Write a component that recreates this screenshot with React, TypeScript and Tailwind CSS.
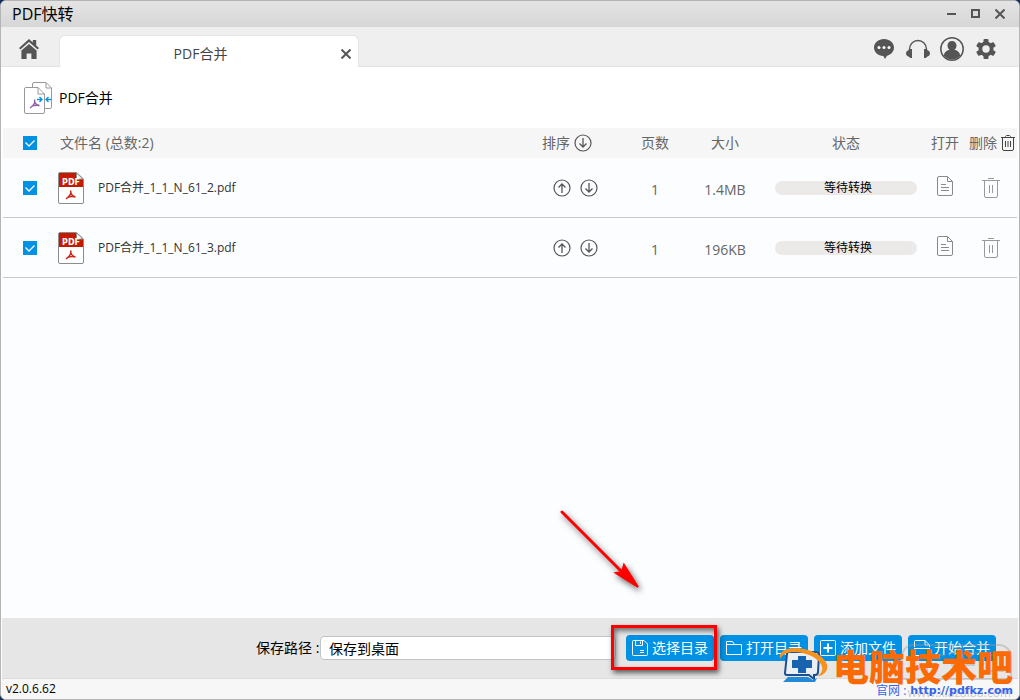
import { useState } from "react";

const initialFiles = [
  { id: 1, name: "PDF合并_1_1_N_61_2.pdf", pages: 1, size: "1.4MB" },
  { id: 2, name: "PDF合并_1_1_N_61_3.pdf", pages: 1, size: "196KB" },
];

const HomeIcon = () => (
  <svg width="20" height="20" viewBox="0 0 20 20" fill="#555">
    <path d="M10 0L0 9l1.4 1.5L10 3l8.600 7.500L20 9l-2.800-2.500V1h-3.400v2.400z" />
    <path d="M10 5L2.400 11.600V20h5.200v-5.500h4.800V20h5.200v-8.400z" />
  </svg>
);

const ChatIcon = () => (
  <svg width="20" height="20" viewBox="0 0 20 20">
    <path
      fill="#555"
      d="M10 0C4.400 0 0 3.700 0 8.600c0 4.700 4.100 8.300 9.300 8.500L11 20l2-3.300c4.100-1 7-4.200 7-8.100C20 3.700 15.600 0 10 0z"
    />
    <circle cx="5" cy="8.500" r="1.500" fill="#fff" />
    <circle cx="10" cy="8.500" r="1.500" fill="#fff" />
    <circle cx="15" cy="8.500" r="1.500" fill="#fff" />
  </svg>
);

const HeadsetIcon = () => (
  <svg width="24" height="20" viewBox="0 0 24 20">
    <path d="M3.500 12V10a8.500 8.500 0 0 1 17 0v2" fill="none" stroke="#555" strokeWidth="1.400" />
    <path
      fill="#555"
      d="M6 10v9H4.200L3 17.800C1.200 17.500 0 16 0 14.300s1.200-3 3-3.400L4.200 10zM18 10v9h1.800l1.200-1.200c1.800-.3 3-1.800 3-3.500s-1.200-3-3-3.400L19.800 10z"
    />
  </svg>
);

const UserIcon = () => (
  <svg width="24" height="24" viewBox="0 0 24 24">
    <circle cx="12" cy="12" r="11.200" fill="none" stroke="#555" strokeWidth="1.500" />
    <path
      fill="#555"
      d="M12 4c-2.700 0-4.500 1.900-4.500 4.500 0 1.900.8 3.400 2 4.300-3.200.7-5.200 2.600-5.700 5.700C5.800 21 8.700 22.500 12 22.500s6.200-1.500 8.200-4c-.5-3.100-2.500-5-5.700-5.700 1.200-.9 2-2.400 2-4.300C16.500 5.900 14.700 4 12 4z"
    />
  </svg>
);

const GearIcon = () => (
  <svg width="20" height="20" viewBox="0 0 20 20">
    <g fill="#555">
      <circle cx="10" cy="10" r="7.500" />
      <rect x="7.500" y="0" width="5" height="20" rx="1" />
      <rect x="7.500" y="0" width="5" height="20" rx="1" transform="rotate(60 10 10)" />
      <rect x="7.500" y="0" width="5" height="20" rx="1" transform="rotate(120 10 10)" />
    </g>
    <circle cx="10" cy="10" r="3.700" fill="#efefef" />
  </svg>
);

const MergeIcon = () => (
  <svg width="28" height="32" viewBox="0 0 28 32" fill="none">
    <path
      d="M8.500 5V2A1.500 1.500 0 0 1 10 .500h12L27.500 6v19a1.500 1.500 0 0 1-1.500 1.500h-5M22 .500V6h5.500"
      stroke="#999"
    />
    <path
      d="M2 5.500h12L20.500 12v18a1.500 1.500 0 0 1-1.500 1.500H2A1.500 1.500 0 0 1 .500 30V7A1.500 1.500 0 0 1 2 5.500zM14 5.500V12h6.500"
      fill="#fff"
      stroke="#999"
    />
    <path
      d="M10.500 17.500c1 3-1.500 6.500-4.500 8.500M10.500 20c1 2 2.500 3.200 5 3.500M8 24c2-.8 4-1 7-.5"
      stroke="#9060a8"
      strokeWidth="1.400"
    />
    <path
      d="M13 17.500h5M15.500 15l2.500 2.500-2.500 2.500M27 17.500h-5M24.500 15L22 17.500l2.500 2.500"
      stroke="#0c95de"
      strokeWidth="1.400"
    />
  </svg>
);

const PdfIcon = () => (
  <svg width="26" height="32" viewBox="0 0 26 32">
    <path
      d="M2 .500h16.500L25.500 7v23a1.500 1.500 0 0 1-1.500 1.500H2A1.500 1.500 0 0 1 .500 30V2A1.500 1.500 0 0 1 2 .500z"
      fill="#fff"
      stroke="#8c8c8c"
    />
    <path d="M1 1h17.500v6H25v8H1z" fill="#c41a02" />
    <path d="M18.500 1v6H25z" fill="#fff" stroke="#8c8c8c" />
    <text
      x="13"
      y="13"
      textAnchor="middle"
      fontSize="8"
      fontWeight="bold"
      fontFamily="DejaVu Sans, sans-serif"
      fill="#fff"
    >
      PDF
    </text>
    <path
      d="M12.500 18.500c1.400 3-1 6-4.500 8.500M12.800 21c.7 2 2 3.400 4.700 4M9.500 25.500c2.500-1 5-1.200 8-.5"
      fill="none"
      stroke="#c8281c"
      strokeWidth="1.500"
    />
  </svg>
);

const CircleArrow = ({ up = false }: { up?: boolean }) => (
  <svg width="18" height="18" viewBox="0 0 18 18" fill="none" stroke="#555">
    <circle cx="9" cy="9" r="8" strokeWidth="1.200" />
    <path
      d={up ? "M9 14V5M5.500 8.500L9 5l3.500 3.500" : "M9 4v9M5.500 9.500L9 13l3.500-3.500"}
      strokeWidth="1.300"
    />
  </svg>
);

const DocIcon = () => (
  <svg width="16" height="20" viewBox="0 0 16 20" fill="none" stroke="#8a8a8a">
    <path d="M2 .500h8.500l5 5V18a1.500 1.500 0 0 1-1.500 1.500H2A1.500 1.500 0 0 1 .500 18V2A1.500 1.500 0 0 1 2 .500zM10.500.500v5h5" />
    <path d="M4 8.500h5M4 11.500h8M4 14.500h8" />
  </svg>
);

const TrashIcon = () => (
  <svg width="18" height="20" viewBox="0 0 18 20" fill="none" stroke="#999">
    <path d="M0 2.500h18M6 .500h6M2.500 2.500V18A1.500 1.500 0 0 0 4 19.500h10a1.500 1.500 0 0 0 1.500-1.500V2.500" />
    <path d="M7.500 7v8M10.500 7v8" />
  </svg>
);

const TrashAllIcon = () => (
  <svg width="14" height="16" viewBox="0 0 14 16" fill="none" stroke="#444">
    <path d="M0 2.500h14M4.500 2.500v-1l1-1h3l1 1v1M1.500 2.500V14A1.500 1.500 0 0 0 3 15.500h8a1.500 1.500 0 0 0 1.500-1.500V2.500" />
    <path d="M4.500 6v6M7 6v6M9.500 6v6" />
  </svg>
);

const SaveIcon = () => (
  <svg width="16" height="16" viewBox="0 0 16 16" fill="none" stroke="#fff">
    <path d="M1.500.500H12L15.500 4v10.500a1 1 0 0 1-1 1h-13a1 1 0 0 1-1-1v-13a1 1 0 0 1 1-1z" />
    <path d="M3.500 1v4.500h7V1M8.500 1.500V4M8 10.500h4M8 12.500h4" />
  </svg>
);

const FolderIcon = () => (
  <svg width="16" height="16" viewBox="0 0 16 16" fill="none" stroke="#fff">
    <path d="M.500 14.500v-13h6l2 3h7v10zM.500 4.500h8" />
  </svg>
);

const AddIcon = () => (
  <svg width="16" height="16" viewBox="0 0 16 16" fill="none" stroke="#fff">
    <rect x=".5" y=".5" width="15" height="15" rx="1" />
    <path d="M8 3.500v9M3.500 8h9" strokeWidth="2" />
  </svg>
);

const StartIcon = () => (
  <svg width="16" height="16" viewBox="0 0 16 16" fill="none" stroke="#fff">
    <path d="M.500 7V1.500a1 1 0 0 1 1-1H11L15.500 5v2M11 .500V5h4.500M0 8.500h16M.500 10v4.500a1 1 0 0 0 1 1h13a1 1 0 0 0 1-1V10" />
  </svg>
);

const CheckBox = ({
  label,
  checked,
  onChange,
}: {
  label: string;
  checked: boolean;
  onChange: () => void;
}) => (
  <label className="mx-auto grid h-3.5 w-3.5">
    <input
      type="checkbox"
      aria-label={label}
      checked={checked}
      onChange={onChange}
      className="col-start-1 row-start-1 h-3.5 w-3.5 appearance-none border border-[#0090e4] checked:bg-[#0090e4]"
    />
    <svg
      className="pointer-events-none col-start-1 row-start-1"
      width="14"
      height="14"
      viewBox="0 0 14 14"
      fill="none"
      stroke="#fff"
      strokeWidth="1.300"
    >
      <path d="M2.500 6.500L6 10l5.500-5.500" />
    </svg>
  </label>
);

const buttonClass =
  "flex h-[26px] w-[88px] shrink-0 items-center justify-center gap-1 whitespace-nowrap rounded bg-[#0090e4] text-sm text-white";

const App = () => {
  const [selected, setSelected] = useState<number[]>([1, 2]);
  const [path, setPath] = useState<string>("保存到桌面");

  const toggle = (id: number) =>
    setSelected(
      selected.includes(id)
        ? selected.filter((item) => item !== id)
        : [...selected, id],
    );

  const allSelected = selected.length === initialFiles.length;

  return (
    <div className="bg-[#16305c]">
      <div className="relative flex min-h-screen flex-col overflow-hidden rounded-md border border-[#b4b4b4] bg-[#fbfdff] font-['Open_Sans','Noto_Sans_CJK_SC',sans-serif] text-black">
        <header className="flex h-[26px] items-center justify-between bg-linear-to-b from-[#e4e4e4] to-[#d6d6d6] pr-3.5 pl-[11px]">
          <h1 className="text-base leading-6">PDF快转</h1>
          <div className="flex gap-3.5">
            <button type="button" aria-label="最小化">
              <svg width="10" height="10" stroke="#555" strokeWidth="2">
                <path d="M0 5h9" />
              </svg>
            </button>
            <button type="button" aria-label="最大化">
              <svg width="10" height="10" fill="none" stroke="#555" strokeWidth="2">
                <path d="M1 1h7v7H1z" />
              </svg>
            </button>
            <button type="button" aria-label="关闭">
              <svg width="10" height="10" stroke="#555" strokeWidth="2">
                <path d="M.500.500l9 9M9.500.500l-9 9" />
              </svg>
            </button>
          </div>
        </header>

        <nav className="flex h-10 items-end bg-[#efefef] shadow-[inset_0_-1px_0_#e2e2e2]">
          <button type="button" aria-label="首页" className="mr-5 mb-2 ml-[18px]">
            <HomeIcon />
          </button>
          <div className="flex h-8 w-[300px] items-center rounded-t-md border border-b-0 border-[#e4e4e4] bg-white pt-1 pr-[7px]">
            <a href="#merge" className="flex-1 text-center text-sm text-[#444]">
              PDF合并
            </a>
            <button type="button" aria-label="关闭标签">
              <svg width="10" height="10" stroke="#555" strokeWidth="2">
                <path d="M.500.500l9 9M9.500.500l-9 9" />
              </svg>
            </button>
          </div>
          <div className="mr-[23px] mb-1.5 ml-auto flex items-center gap-2.5">
            <button type="button" aria-label="消息" className="mr-0.5">
              <ChatIcon />
            </button>
            <button type="button" aria-label="客服">
              <HeadsetIcon />
            </button>
            <button type="button" aria-label="用户">
              <UserIcon />
            </button>
            <button type="button" aria-label="设置" className="ml-0.5">
              <GearIcon />
            </button>
          </div>
        </nav>

        <section className="flex h-[61px] items-center gap-[7px] bg-white pl-[23px]">
          <MergeIcon />
          <h2 className="text-sm">PDF合并</h2>
        </section>

        <main className="flex-1 px-0.5">
          <table className="w-full table-fixed border-separate border-spacing-0 text-center text-sm text-[#666]">
            <colgroup>
              <col className="w-[54px]" />
              <col />
              <col className="w-[104px]" />
              <col className="w-14" />
              <col className="w-[84px]" />
              <col className="w-[158px]" />
              <col className="w-10" />
              <col className="w-[52px]" />
            </colgroup>
            <thead>
              <tr className="h-[30px] bg-[#f6f6f6]">
                <th className="p-0">
                  <CheckBox
                    label="全选"
                    checked={allSelected}
                    onChange={() =>
                      setSelected(allSelected ? [] : initialFiles.map((f) => f.id))
                    }
                  />
                </th>
                <th className="p-0 pl-[3px] text-left font-normal">
                  文件名 (总数:{initialFiles.length})
                </th>
                <th className="p-0 font-normal">
                  <div className="flex items-center justify-center gap-1 pr-4">
                    排序
                    <button type="button" aria-label="倒序">
                      <CircleArrow />
                    </button>
                  </div>
                </th>
                <th className="p-0 font-normal">页数</th>
                <th className="p-0 font-normal">大小</th>
                <th className="p-0 font-normal">状态</th>
                <th className="p-0 font-normal">打开</th>
                <th className="p-0 font-normal">
                  <div className="flex items-center justify-end gap-1 whitespace-nowrap pr-0.5">
                    删除
                    <button type="button" aria-label="全部删除">
                      <TrashAllIcon />
                    </button>
                  </div>
                </th>
              </tr>
            </thead>
            <tbody>
              {initialFiles.map((file) => (
                <tr key={file.id} className="h-[60px] *:border-b *:border-[#c8cacc]">
                  <td className="p-0">
                    <CheckBox
                      label={file.name}
                      checked={selected.includes(file.id)}
                      onChange={() => toggle(file.id)}
                    />
                  </td>
                  <td className="p-0">
                    <div className="flex items-center gap-3.5 pl-px text-xs text-[#333]">
                      <PdfIcon />
                      {file.name}
                    </div>
                  </td>
                  <td className="p-0">
                    <div className="flex justify-center gap-[9px]">
                      <button type="button" aria-label="上移">
                        <CircleArrow up />
                      </button>
                      <button type="button" aria-label="下移">
                        <CircleArrow />
                      </button>
                    </div>
                  </td>
                  <td className="p-0 pt-1">{file.pages}</td>
                  <td className="p-0 pt-1">{file.size}</td>
                  <td className="p-0">
                    <div className="mx-auto h-3.5 w-[142px] rounded-full bg-[#ebeae8] pl-1 text-xs leading-3.5 text-black">
                      等待转换
                    </div>
                  </td>
                  <td className="p-0 pb-1">
                    <button type="button" aria-label="打开" className="mx-auto block">
                      <DocIcon />
                    </button>
                  </td>
                  <td className="p-0">
                    <button type="button" aria-label="删除" className="mx-auto block">
                      <TrashIcon />
                    </button>
                  </td>
                </tr>
              ))}
            </tbody>
          </table>
        </main>

        <footer className="mx-px">
          <div className="flex h-[60px] items-center gap-1.5 bg-[#e6e6e6] pr-[22px] pl-[25%]">
            <div className="mr-1 flex flex-1 items-center">
              <label htmlFor="path" className="w-16 shrink-0 text-sm whitespace-nowrap">
                保存路径 :
              </label>
              <input
                id="path"
                type="text"
                value={path}
                onChange={(e) => setPath(e.target.value)}
                className="h-6 w-full min-w-0 rounded border border-[#c4c4c4] bg-white px-2 text-sm"
              />
            </div>
            <div className="relative">
              <button type="button" className={buttonClass}>
                <SaveIcon />
                选择目录
              </button>
              <div className="pointer-events-none absolute -top-2.5 -left-[15px] h-[45px] w-[106px] border-3 border-[#f00] shadow-[2px_3px_5px_rgba(0,0,0,0.6),inset_2px_3px_5px_rgba(0,0,0,0.5)]" />
              {/* arrow pointing at the highlighted button */}
              <svg
                className="pointer-events-none absolute right-[69px] bottom-[66px] drop-shadow-[2px_3px_3px_rgba(0,0,0,0.6)]"
                width="90"
                height="90"
                viewBox="0 0 90 90"
              >
                <path d="M7 7l59 59" stroke="#f00" strokeWidth="3" strokeLinecap="round" />
                <path d="M83 82L61 68l6-1 2-7z" fill="#f00" stroke="#f00" strokeWidth="2" />
              </svg>
            </div>
            <button type="button" className={buttonClass}>
              <FolderIcon />
              打开目录
            </button>
            <button type="button" className={buttonClass}>
              <AddIcon />
              添加文件
            </button>
            <button type="button" className={buttonClass}>
              <StartIcon />
              开始合并
            </button>
          </div>
          <div className="h-[21px] border-t border-[#dcdcdc] bg-[#f7f7f7] pl-1 text-xs leading-5">
            v2.0.6.62
          </div>
        </footer>

        {/* site watermark */}
        <div className="pointer-events-none absolute right-1 bottom-0 h-[56px] w-[118px] opacity-40">
          <svg width="118" height="54" viewBox="0 0 118 54" fill="none" stroke="#999" strokeWidth="2">
            <path d="M14 2h88a12 12 0 0 1 12 12v22H5V14a12 12 0 0 1 9-12zM22 12h26M30 12v18M52 10h28M66 10v20M54 22h24M90 12h16v16H90z" />
          </svg>
          <span className="absolute right-1 bottom-0 text-xs leading-3 text-[#888]">
            www.xiazaiba.com
          </span>
        </div>
        <div className="pointer-events-none absolute right-1.5 bottom-0 flex items-start">
          <svg className="mr-1" width="50" height="36" viewBox="0 0 50 36">
            <path
              d="M10 5h27a3 3 0 0 1 3 3l-1 17a3 3 0 0 1-3 3h-1v4l-5-4H8a2 2 0 0 1-2-2L8 7a2 2 0 0 1 2-2z"
              fill="#eceff2"
              stroke="#1b4f91"
              strokeWidth="2"
            />
            <path d="M19 9h8v4h6v8h-6v5h-8v-5h-6v-8h6z" fill="#1763b0" />
            <path d="M9 30h20l5 3 4-2-2 4H4z" fill="#2489d6" />
            <path
              d="M1 12C-2 1 17-2 32 4c15 6 22 17 11 24-2 1-3 1-4 1 9-7 3-16-9-21C18 3 4 4 1 12z"
              fill="#f59220"
            />
          </svg>
          <div className="flex flex-col items-end">
            <strong className="font-['Noto_Sans_CJK_SC',sans-serif] text-4xl leading-9 font-black whitespace-nowrap text-[#fb6a04]">
              电脑技术吧
            </strong>
            <p className="flex gap-1 text-xs leading-4 whitespace-nowrap text-[#3465ea]">
              <span>官网 :</span>
              <a href="#site" className="font-['DejaVu_Sans',sans-serif] text-[11px] font-bold">
                http://pdfkz.com
              </a>
            </p>
          </div>
        </div>
      </div>
    </div>
  );
};

export default App;
